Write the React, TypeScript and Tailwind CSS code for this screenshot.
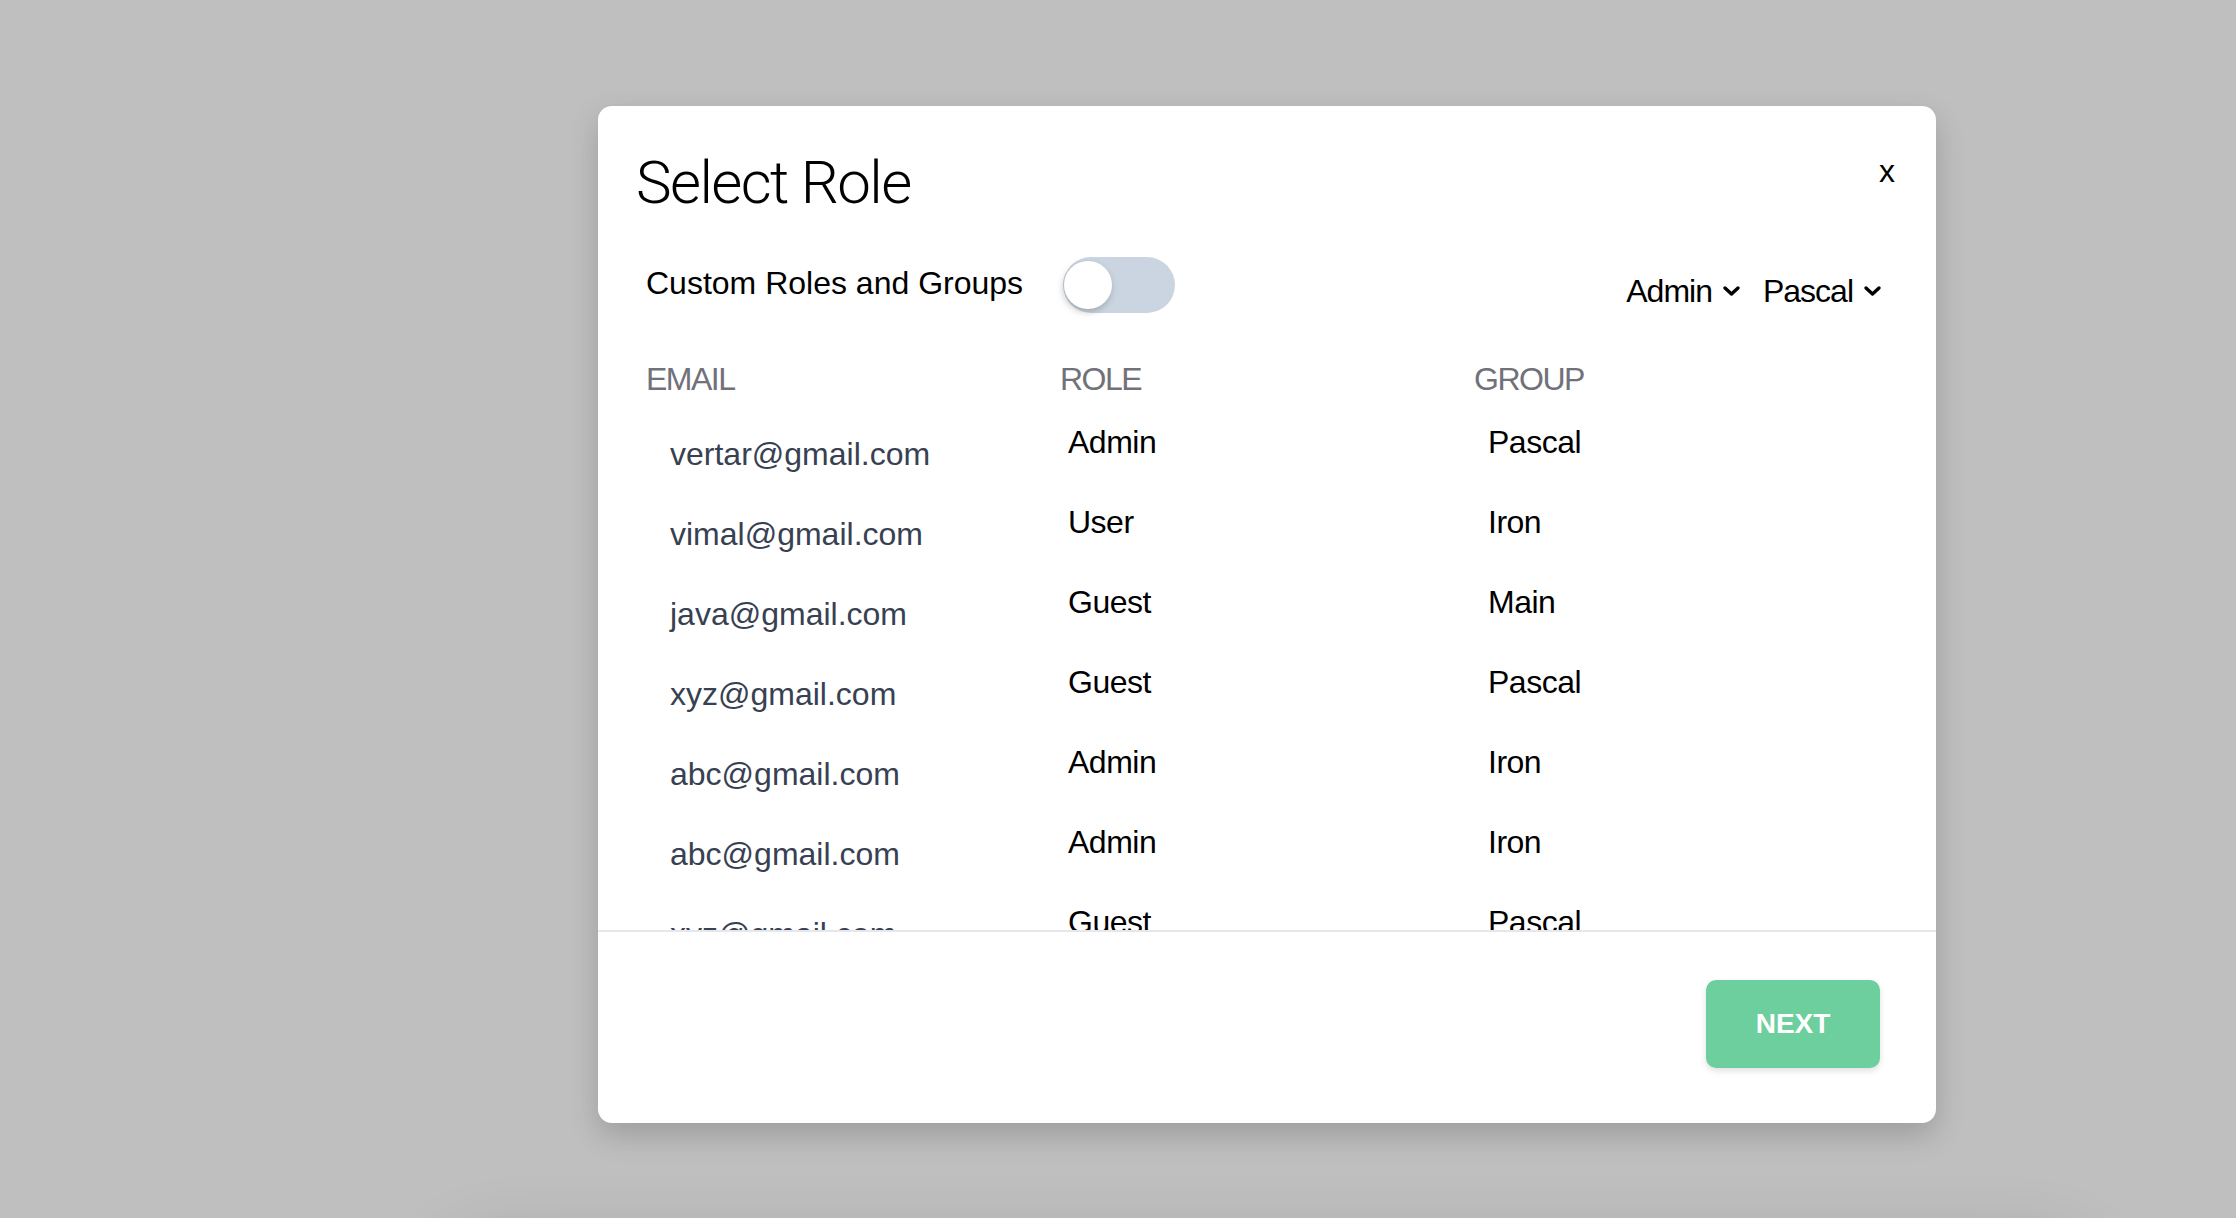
import { useState } from "react";

const rows = [
  { email: "vertar@gmail.com", role: "Admin", group: "Pascal" },
  { email: "vimal@gmail.com", role: "User", group: "Iron" },
  { email: "java@gmail.com", role: "Guest", group: "Main" },
  { email: "xyz@gmail.com", role: "Guest", group: "Pascal" },
  { email: "abc@gmail.com", role: "Admin", group: "Iron" },
  { email: "abc@gmail.com", role: "Admin", group: "Iron" },
  { email: "xyz@gmail.com", role: "Guest", group: "Pascal" },
  { email: "java@gmail.com", role: "User", group: "Main" },
];

function Chevron() {
  return (
    <svg width="19" height="12" viewBox="0 0 19 12" className="ml-[10px]">
      <path
        d="M3 3 L9.5 9 L16 3"
        fill="none"
        stroke="#000"
        strokeWidth="3.4"
        strokeLinecap="round"
        strokeLinejoin="round"
      />
    </svg>
  );
}

export default function App() {
  const [custom, setCustom] = useState(false);

  return (
    <div className="h-screen w-full overflow-hidden bg-[#bfbfbf] pl-[298px] font-['Liberation_Sans',Arial,sans-serif]">
      <div className="flex flex-col items-center pt-[106px]">
        <div className="w-[1338px] h-[1017px] flex flex-col bg-white rounded-[14px] shadow-[0_12px_30px_rgba(0,0,0,0.18)]">
          <div className="flex items-start justify-between pl-[38px] pr-[41px] pt-[47px]">
            <h2 className="font-['Roboto',sans-serif] font-light text-[60px] leading-[60px] tracking-[-1.6px] text-black">
              Select Role
            </h2>
            <button className="mt-[2px] text-[32px] leading-[32px] text-black">x</button>
          </div>

          <div className="mt-[44px] flex items-start justify-between pl-[48px] pr-[54px]">
            <div className="flex items-center h-[56px] gap-[40px]">
              <span className="mb-1 text-[32px] leading-[32px] text-black">
                Custom Roles and Groups
              </span>
              <button
                onClick={() => setCustom(!custom)}
                className="flex items-center w-[112px] h-[56px] rounded-full bg-[#cbd5e1] pl-[1px]"
              >
                <span className="w-[48px] h-[48px] rounded-full bg-white shadow-[-1px_3px_7px_rgba(0,0,0,0.22)]"></span>
              </button>
            </div>
            <div className="mt-[18px] flex items-center gap-[22px] text-[32px] leading-[32px] tracking-[-1px] text-black">
              <div className="flex items-center">
                <span>Admin</span>
                <Chevron />
              </div>
              <div className="flex items-center">
                <span>Pascal</span>
                <Chevron />
              </div>
            </div>
          </div>

          <div className="h-[617px] overflow-hidden px-[48px] pt-[50px]">
            <div className="grid grid-cols-3 mb-[23px] text-[32px] leading-[32px] tracking-[-1.5px] text-[#71717a]">
              <div>EMAIL</div>
              <div>ROLE</div>
              <div>GROUP</div>
            </div>
            {rows.map((row, i) => (
              <div key={i} className="grid grid-cols-3 h-[80px]">
                <div className="pl-[24px] pt-[20px] text-[32px] leading-[32px] text-[#374151]">
                  {row.email}
                </div>
                <div className="pl-[8px] pt-[8px] text-[32px] leading-[32px] tracking-[-0.5px] text-black">
                  {row.role}
                </div>
                <div className="pl-[14px] pt-[8px] text-[32px] leading-[32px] tracking-[-0.5px] text-black">
                  {row.group}
                </div>
              </div>
            ))}
          </div>

          <div className="flex justify-end border-t-2 border-[#e5e7eb] pt-[48px] pr-[56px]">
            <button className="w-[174px] h-[88px] rounded-[10px] bg-[#6dcf9d] text-white text-[28px] font-bold shadow-[0_3px_6px_rgba(0,0,0,0.12)]">
              NEXT
            </button>
          </div>
        </div>

        <div className="mt-[130px] w-[1620px] h-[200px] rounded-[24px] bg-[#bfbfbf] shadow-[0_0_80px_rgba(0,0,0,0.2)]"></div>
      </div>
    </div>
  );
}
